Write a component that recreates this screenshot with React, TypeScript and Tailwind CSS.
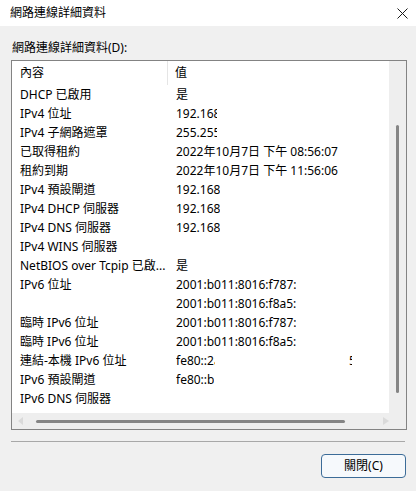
import React from 'react';

interface Row {
  name: string;
  value?: string;
  clip?: number;
  tail?: string;
}

const rows: Row[] = [
  { name: 'DHCP 已啟用', value: '是' },
  { name: 'IPv4 位址', value: '192.168', clip: 41 },
  { name: 'IPv4 子網路遮罩', value: '255.255', clip: 41 },
  { name: '已取得租約', value: '2022年10月7日 下午 08:56:07' },
  { name: '租約到期', value: '2022年10月7日 下午 11:56:06' },
  { name: 'IPv4 預設閘道', value: '192.168' },
  { name: 'IPv4 DHCP 伺服器', value: '192.168' },
  { name: 'IPv4 DNS 伺服器', value: '192.168' },
  { name: 'IPv4 WINS 伺服器' },
  { name: 'NetBIOS over Tcpip 已啟...', value: '是' },
  { name: 'IPv6 位址', value: '2001:b011:8016:f787:' },
  { name: '', value: '2001:b011:8016:f8a5:' },
  { name: '臨時 IPv6 位址', value: '2001:b011:8016:f787:' },
  { name: '臨時 IPv6 位址', value: '2001:b011:8016:f8a5:' },
  { name: '連結-本機 IPv6 位址', value: 'fe80::2a', clip: 39, tail: '5' },
  { name: 'IPv6 預設閘道', value: 'fe80::b2', clip: 38 },
  { name: 'IPv6 DNS 伺服器' },
];

const font = { fontFamily: '"Noto Sans", "Noto Sans CJK TC", sans-serif' };

const App = () => {
  return (
    <div
      className="w-[416px] h-[491px] bg-[#f0f0f0] flex flex-col text-[12px] text-black overflow-hidden"
      style={font}
    >
      {/* Title bar */}
      <div className="h-[26px] bg-white flex items-center justify-between pl-[10px] pr-[8px] shrink-0">
        <span className="leading-[16px]">網路連線詳細資料</span>
        <svg width="11" height="11" viewBox="0 0 11 11" className="mt-[1px]">
          <path d="M0.5 0.5 L10.5 10.5 M10.5 0.5 L0.5 10.5" stroke="#1a1a1a" strokeWidth="1" />
        </svg>
      </div>

      <div className="flex flex-col px-[11px]">
        <label className="mt-[14px] pl-[1px] h-[16px] leading-[16px]">網路連線詳細資料(D):</label>

        {/* List view */}
        <div className="mt-[4px] w-[396px] h-[370px] border border-[#838383] bg-white flex">
          <div className="flex-1 flex flex-col min-w-0">
            <div className="flex-1 overflow-hidden">
              <div className="flex h-[24px] items-center">
                <div className="w-[156px] h-full pl-[8px] flex items-center border-r border-[#e5e5e5]">內容</div>
                <div className="pl-[7px]">值</div>
              </div>
              {rows.map((r, i) => (
                <div key={i} className="flex h-[19px] items-center whitespace-nowrap">
                  <div className="w-[157px] pl-[8px] overflow-hidden">{r.name}</div>
                  <div className="pl-[7px] flex items-center">
                    {r.value && (
                      <span
                        className="overflow-hidden inline-block"
                        style={r.clip ? { width: r.clip } : undefined}
                      >
                        {r.value}
                      </span>
                    )}
                    {r.tail && (
                      <span className="ml-[134px] w-[3px] overflow-hidden inline-block">{r.tail}</span>
                    )}
                  </div>
                </div>
              ))}
            </div>
            {/* Horizontal scrollbar */}
            <div className="h-[16px] bg-[#eeeeee] flex items-center shrink-0">
              <svg width="6" height="8" viewBox="0 0 6 8" className="ml-[6px]">
                <path d="M5 0 L0 4 L5 8 Z" fill="#dadada" />
              </svg>
              <div className="ml-[12px] w-[310px] h-[3px] rounded-full bg-[#858585]" />
              <svg width="6" height="8" viewBox="0 0 6 8" className="ml-[38px]">
                <path d="M0 0 L6 4 L0 8 Z" fill="#dadada" />
              </svg>
            </div>
          </div>
          {/* Vertical scrollbar */}
          <div className="w-[17px] bg-[#eeeeee] flex flex-col items-start shrink-0">
            <div className="ml-[7px] mt-[64px] w-[3px] h-[268px] rounded-full bg-[#858585]" />
          </div>
        </div>

        <div className="mt-[11px] h-px w-[394px] bg-[#a8a8a8]" />

        <div className="flex justify-end mt-[12px]">
          <button className="w-[85px] h-[24px] rounded-[4px] border border-[#3c6c98] bg-[#f6f9fc] flex items-center justify-center leading-none mr-[-1px]">
            關閉(C)
          </button>
        </div>
      </div>
    </div>
  );
};

export default App;
